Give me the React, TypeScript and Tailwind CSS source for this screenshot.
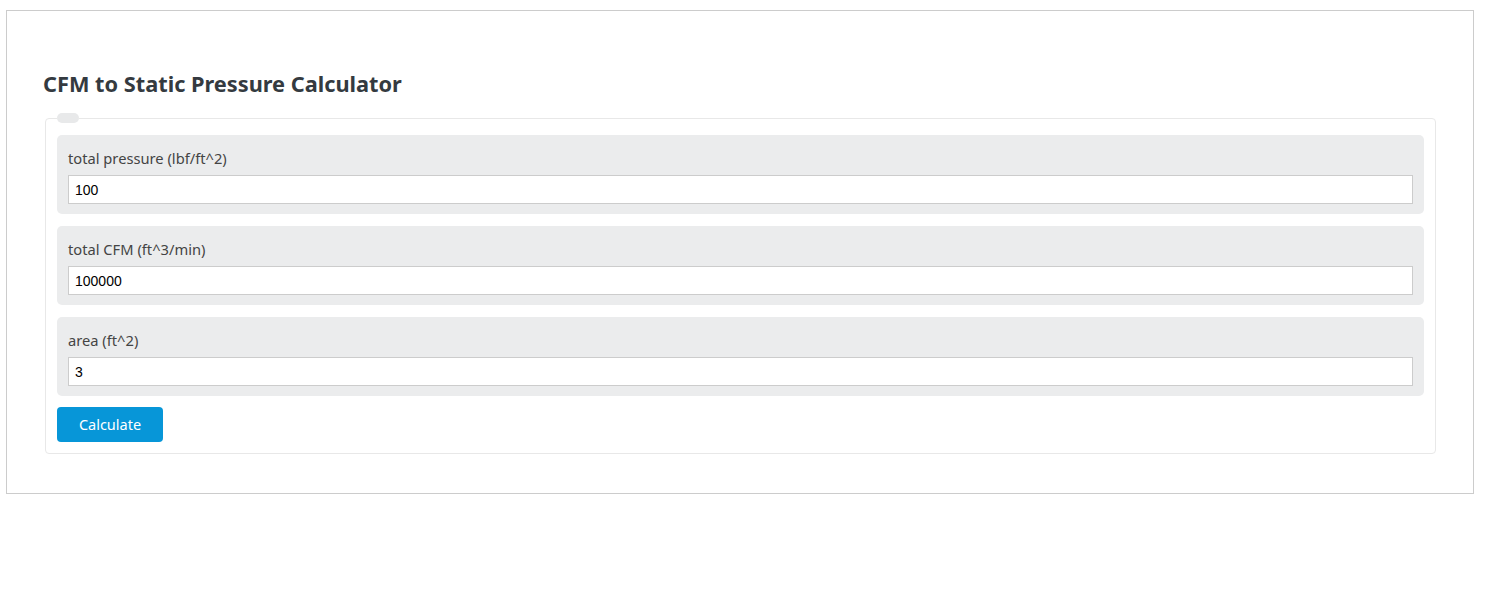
const fields = [
  { label: 'total pressure (lbf/ft^2)', value: '100' },
  { label: 'total CFM (ft^3/min)', value: '100000' },
  { label: 'area (ft^2)', value: '3' },
];

export default function App() {
  return (
    <div className="min-h-[596px] bg-white pt-[10px] pl-[6px]" style={{ fontFamily: '"Noto Sans", "Open Sans", sans-serif' }}>
      <div className="w-[1468px] border border-[#cccccc] px-[36px] pt-[58px] pb-[39px]">
        <h2 className="mb-[14px] text-[21.75px] font-bold leading-[30px] text-[#343a40]">
          CFM to Static Pressure Calculator
        </h2>
        <fieldset className="ml-[2px] mr-[1px] rounded-[4px] border border-[#e8e8e8] px-[11px] pt-[12px] pb-[11px]">
          <legend className="h-[10px] w-[22px] rounded-full bg-[#e8e9ea]" />
          <div className="flex flex-col gap-[12px]">
            {fields.map((f) => (
              <div key={f.label} className="rounded-[5px] bg-[#ebeced] px-[11px] pt-[13px] pb-[10px]">
                <label className="block text-[14.7px] leading-[20px] text-[#444444]">{f.label}</label>
                <input
                  readOnly
                  value={f.value}
                  className="mt-[7px] block h-[29px] w-full border border-[#cccccc] bg-white px-[6px] text-[14px] text-black outline-none"
                  style={{ fontFamily: '"Liberation Sans", Arial, sans-serif' }}
                />
              </div>
            ))}
            <div className="-mt-[1px]">
              <button className="h-[35px] w-[106px] rounded-[4px] bg-[#0796d8] text-[14.5px] text-white">
                Calculate
              </button>
            </div>
          </div>
        </fieldset>
      </div>
    </div>
  );
}
